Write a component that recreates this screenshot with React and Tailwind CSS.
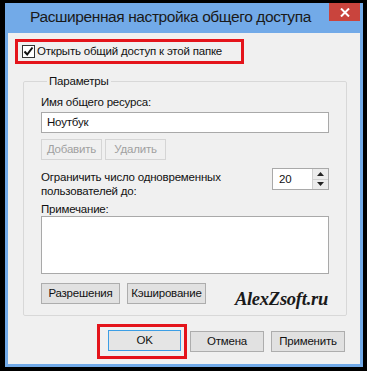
import React from 'react';

const ui = { fontFamily: '"Liberation Sans", Arial, sans-serif' };

const WinButton = ({ label, disabled, isDefault, className = '' }) => (
  <div
    className={
      'h-[21px] flex items-center justify-center border text-[11.5px] tracking-[-0.2px] whitespace-nowrap ' +
      (isDefault
        ? 'border-[#3c9ee5] bg-[#e5e5e5] text-[#111] '
        : disabled
        ? 'border-[#d5d5d5] bg-[#f0f0f0] text-[#a0a0a0] '
        : 'border-[#adadad] bg-[#e1e1e1] text-[#111] ') +
      className
    }
  >
    {label}
  </div>
);

const App = () => {
  return (
    <div className="w-[367px] h-[371px] bg-black pt-[3px] pl-[5px]" style={ui}>
      <div className="w-[358px] h-[364px] bg-[#72aae8] flex flex-col px-[3px] pb-[3px]">
        {/* title bar */}
        <div className="h-[30px] flex items-start relative">
          <span className="mt-[2px] ml-[22px] text-[15.5px] tracking-[-0.4px] text-[#1a1a1a] whitespace-nowrap">
            Расширенная настройка общего доступа
          </span>
          <div className="absolute right-0 top-0 w-[31px] h-[18px] bg-[#c9443d] flex items-center justify-center">
            <svg width="10" height="9" viewBox="0 0 10 9">
              <path d="M1 0.5 L9 8.5 M9 0.5 L1 8.5" stroke="white" strokeWidth="2" />
            </svg>
          </div>
        </div>

        {/* client area */}
        <div className="flex-1 bg-[#f0f0f0] flex flex-col text-[11.5px] tracking-[-0.2px] text-[#111]">
          <div className="ml-[7px] mt-[6px] w-[229px] h-[25px] border-[3px] border-[#e4141b] flex items-center pl-[4px] gap-[2px]">
            <div className="w-[13px] h-[13px] bg-white border border-[#333] flex items-center justify-center">
              <svg width="11" height="11" viewBox="0 0 11 11">
                <path d="M1.5 5.5 L4.2 8.5 L9.5 1.5" fill="none" stroke="#111" strokeWidth="2" />
              </svg>
            </div>
            <span className="leading-none whitespace-nowrap">Открыть общий доступ к этой папке</span>
          </div>

          <fieldset className="ml-[15px] mt-[9px] w-[321px] border border-[#d8d8d8] rounded-[2px] px-[17px] pb-[11px]">
            <legend className="ml-[6px] px-[2px] leading-[16px]">Параметры</legend>
            <div className="mt-[6px] leading-[15px]">Имя общего ресурса:</div>
            <div className="mt-[2px] w-[288px] h-[21px] bg-white border border-[#a9a9a9] flex items-center pl-[5px]">
              Ноутбук
            </div>
            <div className="flex gap-[3px] mt-[6px]">
              <WinButton label="Добавить" disabled className="w-[61px]" />
              <WinButton label="Удалить" disabled className="w-[61px]" />
            </div>
            <div className="flex justify-between items-start mt-[8px]">
              <div className="leading-[14px] mt-[2px]">
                Ограничить число одновременных
                <br />
                пользователей до:
              </div>
              <div className="w-[57px] h-[22px] bg-white border border-[#a9a9a9] flex">
                <span className="flex-1 pl-[6px] leading-[20px]">20</span>
                <div className="w-[16px] flex flex-col border-l border-[#d0d0d0]">
                  <div className="flex-1 bg-[#ececec] border-b border-[#d0d0d0] flex items-center justify-center">
                    <svg width="7" height="4" viewBox="0 0 7 4"><path d="M0 4 L3.5 0 L7 4 Z" fill="#222" /></svg>
                  </div>
                  <div className="flex-1 bg-[#ececec] flex items-center justify-center">
                    <svg width="7" height="4" viewBox="0 0 7 4"><path d="M0 0 L3.5 4 L7 0 Z" fill="#222" /></svg>
                  </div>
                </div>
              </div>
            </div>
            <div className="mt-[4px] leading-[14px]">Примечание:</div>
            <div className="w-[288px] h-[58px] bg-white border border-[#a9a9a9]" />
            <div className="flex items-start mt-[9px]">
              <WinButton label="Разрешения" className="w-[79px]" />
              <WinButton label="Кэширование" className="w-[79px] ml-[7px]" />
              <span
                className="ml-auto mr-[1px] h-[21px] leading-[21px] relative top-[6px] text-[18.5px] tracking-[-0.25px] font-bold italic text-[#1a1a1a]"
                style={{ fontFamily: '"Liberation Serif", serif' }}
              >
                AlexZsoft.ru
              </span>
            </div>
          </fieldset>

          <div className="flex items-center mt-[8px] ml-[89px]">
            <div className="border-[3px] border-[#e4141b] pl-[8px] pr-[3px] pt-[3px] pb-[5px]">
              <WinButton label="OK" isDefault className="w-[73px]" />
            </div>
            <WinButton label="Отмена" className="w-[74px] ml-[3px]" />
            <WinButton label="Применить" className="w-[74px] ml-[7px]" />
          </div>
        </div>
      </div>
    </div>
  );
};

export default App;
